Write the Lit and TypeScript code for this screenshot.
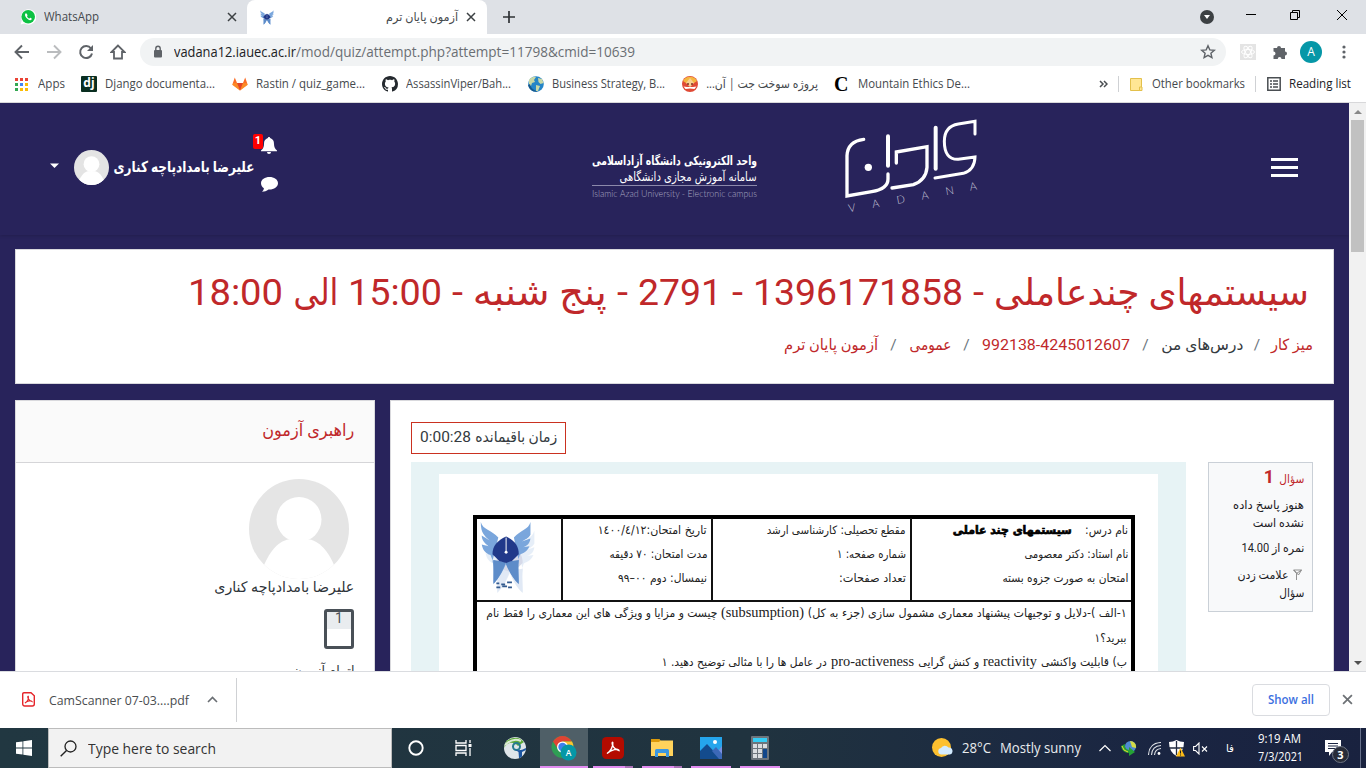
import { LitElement, html, css, svg } from "lit";
import { customElement, property } from "lit/decorators.js";

/** One line of text, condensed or widened to a given width. */
@customElement("fit-text")
class FitText extends LitElement {
  @property({ type: Number }) w = 0;
  static styles = css`
    :host { display: block; white-space: nowrap; flex: none; direction: ltr; text-align: left; }
    :host([dir="rtl"]) { direction: rtl; text-align: right; }
    span { display: inline-block; transform-origin: 0 50%; }
    :host([dir="rtl"]) span { transform-origin: 100% 50%; }
  `;
  firstUpdated() {
    const s = this.renderRoot.querySelector("span") as HTMLElement;
    const k = this.w / s.getBoundingClientRect().width;
    this.style.width = this.w + "px";
    s.style.transform = `scaleX(${k})`;
  }
  render() { return html`<span><slot></slot></span>`; }
}

const en = (w: number, t: string, c = "") => html`<fit-text class=${c} .w=${w}>${t}</fit-text>`;
const fa = (w: number, t: string, c = "") => html`<fit-text dir="rtl" class=${c} .w=${w}>${t}</fit-text>`;

const closeX = (n: number, c: string, sw: number) => html`<svg width=${n} height=${n} viewBox="0 0 10 10"><path d="M1 1l8 8M9 1l-8 8" stroke=${c} stroke-width=${sw} fill="none"/></svg>`;

const emblem = svg`
  <path d="M1 1C3 9 12 9 19 17L13 41C15 48 14 56 14 64C21 58 24 50 27 44C30 50 33 58 40 64C40 56 39 48 40 41L35 17C42 9 50 9 52 1L52 14C50 18 46 19 43 21L52 18C51 25 47 26 44 27L51 26C48 33 43 33 41 35L39 41L27 44L13 40L11 35C6 33 3 30 2 24L9 26C5 23 2 20 2 15L10 20C5 15 1 13 1 1Z" fill="#7aa6dc"/>
  <path d="M14 40C14 48 14 56 14 65C20 58 24 50 27 42ZM40 40C39 48 40 56 40 65C33 58 29 50 26 42Z" fill="#5d8cc9"/>
  <path d="M27 16C36 20 40 26 40 34L33 41L27 43L20 41L13 34C13 26 18 20 27 16Z" fill="#21398a"/>
  <path d="M27 17V32" stroke="#fff" stroke-width="1"/><circle cx="27" cy="32" r="1.500" fill="#fff"/>`;

const avatar = (n: number, bg: string) => html`<svg width=${n} height=${n} viewBox="0 0 100 100">
  <defs><clipPath id="c"><circle cx="50" cy="50" r="50"/></clipPath></defs>
  <g clip-path="url(#c)"><rect width="100" height="100" fill=${bg}/><circle cx="50" cy="40.500" r="22.500" fill="#fff"/>
  <path d="M15 86C24 66 33 62 39 60.500H61C67 62 77 67 85 86V100H15Z" fill="#fff"/></g></svg>`;

@customElement("browser-chrome")
class BrowserChrome extends LitElement {
  static styles = css`
    :host { display: block; height: 103px; background: #fff; font: 12px/16px "Open Sans", "DejaVu Sans", sans-serif; color: #45494d; }
    svg { display: block; flex: none; }
    .strip { height: 34px; background: #dee1e6; display: grid; grid-template-columns: 247px 240px 44px 653px 46px 42px 46px 48px; align-items: center; }
    .strip > * { justify-self: center; }
    .strip > .tab { justify-self: stretch; }
    .tab { height: 34px; display: flex; align-items: center; box-sizing: border-box; }
    .one { padding: 0 10px 0 20px; gap: 8px; }
    .grow { flex: 1; }
    .two { background: #fff; border-radius: 8px 8px 0 0; padding: 0 11px 0 13px; }
    .two fit-text { margin-right: 8px; }
    .bar { height: 36px; display: grid; grid-template-columns: 12px 20px 12px 20px 12px 20px 12px 20px 12px 1086px 12px 20px 12px 20px 10px 24px 10px 20px; align-items: center; }
    .bar > svg { justify-self: center; }
    .omni { height: 28px; border-radius: 14px; background: #f1f3f4; display: flex; align-items: center; padding: 0 10px 0 13px; font-size: 14px; line-height: 20px; color: #6a6e73; }
    .omni .host { color: #202124; margin-left: 11px; }
    .marks { height: 33px; box-sizing: border-box; border-bottom: 1px solid #d8d8da; display: grid; align-items: center; padding-bottom: 4px;
      grid-template-columns: 15px 23px 43px 24px 127px 24px 126px 24px 122px 24px 130px 24px 128px 24px 241px 19px 12px 22px 103px 12px 22px 77px; }
    .sep { width: 1px; height: 16px; background: #cfd1d4; }
    .face { width: 22px; height: 22px; border-radius: 50%; background: #0697a7; color: #fff; font-size: 12px; line-height: 22px; text-align: center; }
    .c { font: bold 20px/18px "Liberation Serif", serif; color: #000; }
    .dj { width: 16px; height: 16px; background: #092e20; color: #fff; font: bold 12px/14px "Open Sans", sans-serif; text-align: center; border-radius: 1px; }
    .dark { color: #202124; }
  `;
  render() {
    const colors = ["#ea4335", "#ea4335", "#ea4335", "#34a853", "#4285f4", "#fbbc05", "#34a853", "#fbbc05", "#fbbc05"];
    return html`
    <div class="strip">
      <div class="tab one">
        <svg width="16" height="16" viewBox="0 0 16 16"><path d="M.6 15.600L1.800 11.500A7.700 7.700 0 1 1 4.600 14.500Z" fill="#fff"/><circle cx="8.200" cy="7.800" r="6.800" fill="#0dc143"/><path d="M5.800 4.300c-1.300.8-1 2.700.7 4.700 1.700 1.900 4.100 3 5.200 1.300.4-.7-.4-1.100-1.400-1.600-.5 0-.7.8-1.100.8-1-.3-1.900-1.200-2.200-2 .1-.3.600-.6.5-1-.4-1.300-.7-2.300-1.700-2.200z" fill="#fff"/></svg>
        ${en(55, "WhatsApp")}<div class="grow"></div>${closeX(10, "#3c4043", 1.5)}
      </div>
      <div class="tab two">
        <svg width="14" height="15" viewBox="0 0 54 66" preserveAspectRatio="none">${emblem}</svg><div class="grow"></div>
        ${fa(72, "آزمون پایان ترم")}${closeX(10, "#3c4043", 1.5)}
      </div>
      <svg width="12" height="12" viewBox="0 0 12 12"><path d="M6 0v12M0 6h12" stroke="#2f3235" stroke-width="1.700"/></svg>
      <i></i>
      <svg width="14" height="14" viewBox="0 0 14 14"><circle cx="7" cy="7" r="7" fill="#3c4043"/><path d="M4 5h6l-3 4z" fill="#fff"/></svg>
      <svg width="10" height="10"><path d="M0 2.500h10" stroke="#000"/></svg>
      <svg width="10" height="18" viewBox="0 0 10 16"><path d="M.5 3.500h7v7h-7zM2.500 3.500v-2h7v7h-2" fill="none" stroke="#000"/></svg>
      <svg width="10" height="16" viewBox="0 0 10 14"><path d="M0 0l10 10M10 0L0 10" stroke="#000" fill="none"/></svg>
    </div>
    <div class="bar">
      <i></i><svg width="16" height="16" viewBox="0 0 16 16"><path d="M15 8H2M8 1.500L1.500 8 8 14.500" fill="none" stroke="#5f6368" stroke-width="1.900"/></svg>
      <i></i><svg width="16" height="16" viewBox="0 0 16 16"><path d="M1 8h13M8 1.500L14.500 8 8 14.500" fill="none" stroke="#babcbe" stroke-width="1.900"/></svg>
      <i></i><svg width="16" height="16" viewBox="0 0 16 16"><path d="M13 4.500A6 6 0 1 0 14 9.500" fill="none" stroke="#5f6368" stroke-width="2"/><path d="M15 1v6H9z" fill="#5f6368"/></svg>
      <i></i><svg width="16" height="16" viewBox="0 0 16 16"><path d="M8 1.500L1.500 8H4v6.500h8V8h2.500z" fill="none" stroke="#5f6368" stroke-width="1.800"/></svg>
      <i></i>
      <div class="omni">
        <svg width="10" height="14" viewBox="0 0 10 14"><rect x="1" y="5" width="8" height="7.500" rx="1" fill="#5f6368"/><path d="M2.800 6V3.500a2.200 2.200 0 0 1 4.400 0V6" fill="none" stroke="#5f6368" stroke-width="1.400"/></svg>
        ${en(122, "vadana12.iauec.ac.ir", "host")}${en(339, "/mod/quiz/attempt.php?attempt=11798&cmid=10639")}
        <div class="grow"></div>
        <svg width="16" height="16" viewBox="0 0 16 16"><path d="M8 1.800l1.800 4.100 4.500.4-3.400 2.900 1 4.400L8 11.300l-3.900 2.300 1-4.400-3.400-2.900 4.500-.4z" fill="none" stroke="#5f6368" stroke-width="1.400"/></svg>
      </div>
      <i></i><svg width="16" height="16" viewBox="0 0 16 16"><rect width="16" height="16" fill="#e4e4e4"/><g fill="none" stroke="#fff"><ellipse cx="8" cy="8" rx="6.500" ry="2.500"/><ellipse cx="8" cy="8" rx="6.500" ry="2.500" transform="rotate(60 8 8)"/><ellipse cx="8" cy="8" rx="6.500" ry="2.500" transform="rotate(120 8 8)"/></g></svg>
      <i></i><svg width="16" height="16" viewBox="0 0 16 16"><path d="M1.500 4H5a2 2 0 0 1 4 0h4v3.500a2 2 0 0 1 0 4V15H9.500a1.900 1.900 0 0 0-3.800 0H1.500v-3.500a2 2 0 0 0 0-4z" fill="#5f6368"/></svg>
      <i></i><div class="face">A</div><i></i>
      <svg width="4" height="14" viewBox="0 0 4 14"><g fill="#5f6368"><circle cx="2" cy="2" r="1.600"/><circle cx="2" cy="7" r="1.600"/><circle cx="2" cy="12" r="1.600"/></g></svg>
    </div>
    <div class="marks">
      <i></i><svg width="13" height="13">${colors.map((c, i) => svg`<rect x=${(i % 3) * 5} y=${Math.floor(i / 3) * 5} width="3" height="3" fill=${c}/>`)}</svg>${en(27, "Apps")}
      <div class="dj">dj</div>${en(110, "Django documenta...")}
      <svg width="16" height="16" viewBox="0 0 16 16"><path d="M8 14.500L.3 8.800 2.800 1.500 5 7h6l2.200-5.500 2.500 7.300z" fill="#fc6d26"/><path d="M8 14.500L5 7h6z" fill="#e24329"/><path d="M.3 8.800L1.500 7H5l3 7.500zM15.700 8.800L14.500 7H11l-3 7.500z" fill="#fca326" opacity=".55"/></svg>${en(109, "Rastin / quiz_game...")}
      <svg width="16" height="16" viewBox="0 0 16 16"><path d="M8 0C3.580 0 0 3.580 0 8c0 3.540 2.290 6.530 5.470 7.590.4.070.55-.17.55-.38 0-.19-.01-.82-.01-1.490-2.010.37-2.530-.49-2.690-.94-.09-.23-.48-.94-.82-1.130-.28-.15-.68-.52-.01-.53.63-.01 1.080.58 1.230.82.72 1.210 1.870.87 2.330.66.07-.52.28-.87.51-1.070-1.780-.2-3.640-.89-3.640-3.950 0-.87.31-1.590.82-2.150-.08-.2-.36-1.020.08-2.120 0 0 .67-.21 2.200.82.64-.18 1.320-.27 2-.27s1.360.09 2 .27c1.530-1.040 2.200-.82 2.200-.82.44 1.100.16 1.920.08 2.120.51.56.82 1.270.82 2.150 0 3.070-1.870 3.750-3.650 3.950.29.25.54.73.54 1.480 0 1.070-.01 1.930-.01 2.200 0 .21.15.46.55.38A8.010 8.010 0 0 0 16 8c0-4.420-3.580-8-8-8z" fill="#24292e"/></svg>${en(105, "AssassinViper/Bah...")}
      <svg width="16" height="16" viewBox="0 0 16 16"><circle cx="8" cy="8" r="7.800" fill="#2585c7"/><path d="M1 4C3 1 6 .5 8 1L6 4l1 2-3 1-1 3-2-1zM10 2l4 1 1.500 4-3 1-2-2zM8 9l4 1-2 5H8z" fill="#c9d8a6"/><path d="M0 9a8 8 0 0 0 10 6.500C5 14 3 12 2 8z" fill="#14588f"/></svg>${en(113, "Business Strategy, B...")}
      <svg width="16" height="16" viewBox="0 0 16 16"><circle cx="8" cy="8" r="8" fill="#e04a35"/><path d="M1 5a8 8 0 0 1 14 0l-3 2H4z" fill="#f5b63f"/><path d="M8 2l4 5-4 4-4-4z" fill="#f8cf91"/><circle cx="6" cy="8" r="1" fill="#7b3220"/><circle cx="10" cy="8" r="1" fill="#7b3220"/><path d="M1.500 10.500L5 11h6l3.500-.5-2 2.500-4.500-.5-4.500.5z" fill="#fff"/></svg>${fa(112, "پروژه سوخت جت | آن...")}
      <span class="c">C</span>${en(112, "Mountain Ethics De...")}
      <svg width="9" height="8" viewBox="0 0 9 8"><path d="M1 1l3 3-3 3M5 1l3 3-3 3" fill="none" stroke="#4a4e52" stroke-width="1.500"/></svg>
      <div class="sep"></div>
      <svg width="13" height="15" viewBox="0 0 13 15"><path d="M.5 1.500h11v12H.5z" fill="#ffe694" stroke="#e3c04b"/><path d="M9.500 10h2.500v3.500H9.500z" fill="#ffe694" stroke="#e3c04b"/></svg>${en(93, "Other bookmarks")}
      <div class="sep"></div>
      <svg width="14" height="14" viewBox="0 0 14 14"><path d="M.8.8h12.400v12.400H.8z" fill="none" stroke="#4a4e52" stroke-width="1.500"/><path d="M3 4h2M6 4h5M3 7h2M6 7h5M3 10h2M6 10h5" stroke="#4a4e52" stroke-width="1.300"/></svg>${en(62, "Reading list", "dark")}
    </div>`;
  }
}

@customElement("quiz-page")
class QuizPage extends LitElement {
  static styles = css`
    :host { display: grid; grid-template-columns: 1349px 17px; height: 568px; overflow: hidden; background: #28235b; font: 15px/22px Roboto, "DejaVu Sans", sans-serif; color: #343a40; }
    svg { display: block; flex: none; }
    .page { height: 568px; overflow: hidden; }
    .head { height: 132px; display: grid; grid-template-columns: 50px 24px 35px 4px 141px 24px 314px 165px 83px 150px 281px 27px; box-shadow: 0 1px 3px rgba(0,0,0,.15); }
    .caret { margin-top: 60px; }
    .pic { margin-top: 47px; }
    .name { margin-top: 53px; font-weight: bold; color: #fff; font-size: 15px; }
    .icons { position: relative; padding: 34px 0 0 7px; display: flex; flex-direction: column; gap: 23px; }
    .badge { position: absolute; left: -1px; top: 31px; width: 10px; height: 15px; background: #f00; border-radius: 2px; color: #fff; font: bold 11px/13px Roboto; text-align: center; }
    .brand { margin-top: 49px; color: #fff; }
    .b1 { font: bold 12.500px/17px "DejaVu Sans"; }
    .b2 { font: 12.500px/15px "DejaVu Sans"; margin-bottom: 1px; }
    .b3 { border-top: 1px solid #8c89ab; font: 300 9.500px/15px Lato, sans-serif; color: #aaa8c2; }
    .logo { margin-top: 9px; }
    .l { font: 300 33px Lato, sans-serif; fill: #c9c8da; }
    .burger { margin-top: 55px; display: flex; flex-direction: column; gap: 5px; }
    .burger b { height: 3px; background: #fff; }
    .card { background: #fff; border: 1px solid #d9d9dd; box-sizing: border-box; }
    .top { margin: 14px 15px 16px; height: 135px; padding: 18px 20px 0; }
    .h { font-size: 37px; line-height: 50px; color: #c0282a; margin-right: 4px; display: flex; gap: 10px; }
    .rt { direction: rtl; }
    .crumbs { display: flex; margin-top: 16px; line-height: 22px; font-size: 15.500px; color: #c0282a; }
    .s { color: #6c757d; width: 31px; text-align: center; }
    .s.n { width: 28px; padding-left: 0; }
    .k { color: #343a40; }
    .cols { display: grid; grid-template-columns: 360px 944px; gap: 15px; margin: 0 15px; height: 300px; }
    .side .t { height: 62px; box-sizing: border-box; border-bottom: 1px solid #d5d5d8; background: #fafafa; padding: 17px 20px; font-size: 17px; line-height: 25px; color: #c0282a; }
    .sb { padding: 16px 20px; }
    .sb .av { margin-right: 5px; width: 100px; }
    .who { margin-top: -2px; font-size: 14.500px; line-height: 22px; color: #2d3238; }
    .qn { margin-top: 10px; width: 24px; height: 34px; border: 3px solid #495057; border-radius: 3px; background: linear-gradient(#e9ecef 17px, #fff 17px); text-align: center; font-size: 14px; line-height: 12px; color: #495057; }
    .end { margin-top: 12px; font-size: 14.500px; }
    .main { padding: 21px 20px 0; }
    .time { box-sizing: border-box; width: 155px; height: 32px; border: 1px solid #ca3120; padding: 3px 8px; font-size: 15px; line-height: 22px; display: flex; direction: rtl; justify-content: space-between; }
    .q { display: flex; gap: 22px; margin-top: 8px; }
    .blue { width: 775px; height: 230px; box-sizing: border-box; background: #e7f3f5; padding: 12px 28px 0; }
    .paper { background: #fff; width: 719px; height: 220px; padding: 41px 24px 0 34px; box-sizing: border-box; color: #222; font: 11.500px/24px "DejaVu Sans"; }
    .table { border: 4px solid #000; border-bottom: 0; width: 662px; height: 190px; box-sizing: border-box; }
    .cells { display: grid; grid-template-columns: 86px 150px 199px 219px; height: 81px; border-bottom: 2px solid #111; }
    .cell { border-right: 2px solid #111; padding-right: 4px; display: flex; flex-direction: column; direction: rtl; margin-top: -1px; padding-top: 0; }
    .cell:last-child { border: 0; padding-right: 3px; }
    .cell:first-child { direction: ltr; padding: 3px 2px; }
    .ln { display: flex; direction: rtl; gap: 4px; }
    .body { padding: 0 4px 0 0; margin-top: -1px; direction: rtl; }
    .body .ln { height: 25px; }
    .body .ln:nth-child(2) { height: 24px; }
    .w { gap: 13px; }
    .bold { font-weight: bold; -webkit-text-stroke: .7px #000; color: #000; }
    .ser { font: 15px/22px "Liberation Serif", serif; }
    .info { box-sizing: border-box; width: 105px; height: 150px; border: 1px solid #cad0d7; background: #f8f9fa; padding: 5px 8px 0; direction: rtl; font-size: 12px; line-height: 18px; color: #1d2125; display: flex; flex-direction: column; }
    .no { display: flex; gap: 5px; color: #c0282a; line-height: 22px; align-items: center; height: 21px; }
    .no b { font-size: 18px; line-height: 20px; margin-top: -3px; }
    .g { margin-top: 7px; }
    .fl { display: flex; gap: 5px; align-items: center; margin-top: 9px; padding-right: 2px; }
    .sc { background: #f1f1f1; display: flex; flex-direction: column; justify-content: space-between; align-items: center; padding: 7px 0 6px; }
    .thumb { width: 13px; height: 132px; background: #c1c1c1; margin-bottom: auto; margin-top: 6px; }
  `;
  render() {
    const vadana: [string, number, number][] = [["V", 867, 325], ["A", 938, 312], ["D", 1012, 300], ["A", 1086, 287], ["N", 1159, 274], ["A", 1231, 260]];
    return html`
    <div class="page">
      <div class="head">
        <i></i><svg class="caret" width="9" height="5" viewBox="0 0 9 5"><path d="M0 .500h9L4.500 5z" fill="#fff"/></svg>
        <div class="pic">${avatar(35, "#e4e4e4")}</div><i></i>
        <div class="name">${fa(141, "علیرضا بامدادپاچه کناری")}</div>
        <div class="icons"><svg width="16" height="17" viewBox="0 0 16 17"><path d="M8 0c.7 0 1.100.4 1.100 1.100C12 2 13 4 13 7c0 3 1 5 3 6.500v.7H0v-.7C2 12 3 10 3 7c0-3 1-5 3.900-5.900C6.900.4 7.300 0 8 0zM6 15h4a2 2 0 0 1-4 0z" fill="#fff"/></svg>
          <svg width="17" height="15" viewBox="0 0 17 15"><path d="M8.500 0C13 0 17 2.500 17 6.200s-4 6.300-8.500 6.300H7.500C5.500 14 3.500 14.700 1 14.700c1-1 1.800-2 1.900-3.500C1 10 0 8 0 6.200 0 2.500 4 0 8.500 0z" fill="#fff"/></svg>
          <span class="badge">1</span></div>
        <i></i>
        <div class="brand">${fa(165, "واحد الکترونیکی دانشگاه آزاداسلامی", "b1")}<div class="rt">${fa(137, "سامانه آموزش مجازی دانشگاهی", "b2")}</div>
          <div class="b3">${en(165, "Islamic Azad University - Electronic campus")}</div></div>
        <i></i>
        <svg class="logo" width="150" height="104" viewBox="840 24 450 312"><g fill="none" stroke="#fff" stroke-width="10" stroke-linecap="round">
          <path d="M911 106Q863 112 861 155V276L935 263Q984 255 984 225V210"/><path d="M984 97V185" stroke-width="12"/>
          <path d="M1009 177V144L1101 128V190Q1098 228 1060 242L996 252"/><path d="M1127 71V194" stroke-width="12"/>
          <path d="M1245 90V52L1195 60Q1153 67 1153 112Q1153 168 1195 166L1245 159Q1244 198 1210 208L1125 222" stroke-width="9"/></g>
          <circle cx="925" cy="190" r="11" fill="#fff"/>
          ${vadana.map(([c, x, y]) => svg`<text class="l" transform="translate(${x} ${y}) rotate(-10)">${c}</text>`)}</svg>
        <i></i><div class="burger"><b></b><b></b><b></b></div>
      </div>
      <div class="card top rt">
        <div class="h">${fa(315, "سیستمهای چندعاملی")}${en(11, "-")}${en(210, "1396171858")}${en(11, "-")}${en(84, "2791")}${en(11, "-")}${fa(134, "پنج شنبه")}${en(11, "-")}${en(94, "15:00")}${fa(45, "الی")}${en(95, "18:00")}</div>
        <div class="crumbs">${fa(42, "میز کار")}<span class="s n">/</span>${fa(82, "درس‌های من", "k")}<span class="s">/</span>${en(148, "992138-4245012607")}<span class="s">/</span>${fa(42, "عمومی")}<span class="s">/</span>${fa(94, "آزمون پایان ترم")}</div>
      </div>
      <div class="cols">
        <div class="card side rt">
          <div class="t">${fa(92, "راهبری آزمون")}</div>
          <div class="sb"><div class="av">${avatar(100, "#e5e5e5")}</div><div class="who">${fa(140, "علیرضا بامدادپاچه کناری")}</div><div class="qn">1</div><div class="end">${fa(75, "اتمام آزمون ...")}</div></div>
        </div>
        <div class="card main">
          <div class="time">${fa(82, "زمان باقیمانده")}${en(51, "0:00:28")}</div>
          <div class="q">
            <div class="blue"><div class="paper"><div class="table">
              <div class="cells">
                <div class="cell"><svg width="62" height="76" viewBox="0 0 62 78"><g opacity=".18" transform="translate(4 9)">${emblem}</g>${emblem}<path d="M17 64h3m2 1h4m2-2h5m-16 5h4m2-1h5m1 1h4" stroke="#345b8f" stroke-width="1.800"/></svg></div>
                <div class="cell">${fa(109, "تاریخ امتحان:١٤٠٠/٤/١٢")}${fa(98, "مدت امتحان: ٧٠ دقیقه")}${fa(89, "نیمسال: دوم ٠٠–٩٩")}</div>
                <div class="cell">${fa(139, "مقطع تحصیلی: کارشناسی ارشد")}${fa(69, "شماره صفحه: ۱")}${fa(67, "تعداد صفحات:")}</div>
                <div class="cell"><div class="ln w">${fa(43, "نام درس:")}${fa(119, "سیستمهای چند عاملی", "bold")}</div>${fa(104, "نام استاد: دکتر معصومی")}${fa(126, "امتحان به صورت جزوه بسته")}</div>
              </div>
              <div class="body">
                <div class="ln">${fa(319, "۱-الف )-دلایل و توجیهات پیشنهاد معماری مشمول سازی (جزء به کل)")}${en(83, "(subsumption)", "ser")}${fa(231, "چیست و مزایا و ویژگی های این معماری را فقط نام")}</div>
                <div class="ln">${fa(32, "ببرید؟۱")}</div>
                <div class="ln">${fa(86, "ب) قابلیت واکنشی")}${en(54, "reactivity", "ser")}${fa(61, "و کنش گرایی")}${en(83, "pro-activeness", "ser")}${fa(165, "در عامل ها را با مثالی توضیح دهید. ۱")}</div>
              </div>
            </div></div></div>
            <div class="info">
              <div class="no">${fa(25, "سؤال")}<b>1</b></div>
              <div>${fa(71, "هنوز پاسخ داده", "g")}${fa(51, "نشده است")}</div>
              <div class="g">${fa(63, "نمره از 14.00")}</div>
              <div class="fl"><svg width="9" height="12" viewBox="0 0 9 12"><path d="M8.500 1L.5 1 3.500 4.500 3.500 11M1 1L5.500 6 8.500 1L3.500 4.500" fill="none" stroke="#868686" stroke-width=".9"/></svg>${fa(51, "علامت زدن")}</div>
              <div>${fa(25, "سؤال")}</div>
            </div>
          </div>
        </div>
      </div>
    </div>
    <div class="sc"><svg width="8" height="4"><path d="M0 4h8L4 0z" fill="#888"/></svg><div class="thumb"></div><svg width="8" height="4"><path d="M0 0h8L4 4z" fill="#505050"/></svg></div>`;
  }
}

@customElement("desktop-bars")
class DesktopBars extends LitElement {
  static styles = css`
    :host { display: block; font: 13px/18px "Open Sans", "DejaVu Sans", sans-serif; color: #4a4d50; }
    svg { display: block; flex: none; }
    .dl { height: 57px; box-sizing: border-box; border-top: 1px solid #dadce0; background: #fff; display: grid; grid-template-columns: 22px 27px 158px 29px 1016px 78px 12px 11px; align-items: center; padding-bottom: 1px; }
    .dl .v { width: 1px; height: 44px; background: #cfd1d4; }
    .all { box-sizing: border-box; width: 78px; height: 32px; border: 1px solid #dadce0; border-radius: 4px; padding: 6px 15px; font-size: 12px; font-weight: 600; color: #3c6fe0; }
    .task { height: 40px; display: flex; background: linear-gradient(90deg, #213741, #20333f 55%, #1a2542 85%, #19223f); color: #fff; }
    .win { width: 48px; display: flex; align-items: center; justify-content: center; }
    .find { box-sizing: border-box; width: 344px; border: 1px solid #bcbcbc; background: #f2f2f2; display: flex; align-items: center; gap: 11px; padding-left: 11px; color: #333; font-size: 15px; }
    .apps { display: grid; grid-template-columns: 48px 46px 54px 48px 5px 40px 9px 40px 9px 40px 9px 40px; }
    .app { display: flex; align-items: center; justify-content: center; box-sizing: border-box; }
    .on { border-bottom: 2px solid #e18cf0; padding-top: 2px; }
    .act { background: #4f5f67; }
    .off { padding-left: 4px; }
    .two { border-image: linear-gradient(90deg, #e18cf0 78%, #ab72b8 78%) 1; border-width: 0 0 2px; border-style: solid; }
    .tray { margin-left: auto; display: grid; grid-template-columns: 30px 38px 99px 22px 27px 21px 24px 33px 32px 67px 35px 6px; align-items: center; font-size: 14px; color: #e9ecef; }
    .clock { font-size: 12px; line-height: 18px; color: #fff; display: flex; flex-direction: column; align-items: flex-start; }
    .note { position: relative; }
    .num { position: absolute; left: 7px; top: 6px; width: 15px; height: 15px; border: 1px solid #6e7584; background: #282c38; border-radius: 50%; font: bold 11px/15px "Open Sans"; text-align: center; color: #fff; }
    .edge { width: 1px; height: 40px; background: #67708a; }
    .f { font-size: 11px; color: #fff; }
  `;
  render() {
    return html`
    <div class="dl"><i></i>
      <svg width="13" height="15" viewBox="0 0 13 15"><path d="M2 .7h7l3.300 3V12a2 2 0 0 1-2 2H2.700a2 2 0 0 1-2-2V2Q.7.7 2 .7z" fill="#fff" stroke="#e5252a" stroke-width="1.400"/><path d="M3 11C5.500 9.500 6.800 6.500 6.300 4.200 5 4 6 8.500 10 9.500 9 8 5 9 3 11z" fill="none" stroke="#e5252a" stroke-width="1.100"/></svg>
      ${en(140, "CamScanner 07-03....pdf")}
      <svg width="11" height="7" viewBox="0 0 11 7"><path d="M1 6l4.500-4.500L10 6" stroke="#6a6e73" stroke-width="1.600" fill="none"/></svg>
      <div class="v"></div>
      <div class="all">${en(46, "Show all")}</div><i></i>${closeX(11, "#6d7175", 1.6)}
    </div>
    <div class="task">
      <div class="win"><svg width="16" height="16" viewBox="0 0 16 16"><path d="M0 2.300L6.500 1.400V7.600H0zM7.300 1.300L16 0v7.600H7.300zM0 8.400h6.500v6.200L0 13.700zM7.300 8.400H16V16l-8.700-1.200z" fill="#fff"/></svg></div>
      <div class="find"><svg width="17" height="17" viewBox="0 0 17 17"><circle cx="10.500" cy="6.500" r="5.500" fill="none" stroke="#222" stroke-width="1.300"/><path d="M6.500 10.500L.7 16.300" stroke="#222" stroke-width="1.400"/></svg>${en(128, "Type here to search")}</div>
      <div class="apps">
        <div class="app"><svg width="16" height="16"><circle cx="8" cy="8" r="6.700" fill="none" stroke="#fff" stroke-width="1.900"/></svg></div>
        <div class="app"><svg width="17" height="16" viewBox="0 0 17 16"><path d="M1 0v3h10V0M1 16v-3h10v3M1 5.500h10v5H1zM15 0v3M15 8v8" fill="none" stroke="#fff" stroke-width="1.300"/><rect x="13.500" y="4" width="3" height="3" fill="#fff"/></svg></div>
        <div class="app off"><svg width="22" height="22" viewBox="0 0 22 22"><defs><clipPath id="r"><circle cx="11" cy="11" r="11"/></clipPath></defs><g clip-path="url(#r)"><rect width="22" height="22" fill="#dfe5e9"/><path d="M0 11C4 4 10 5 14 9L20 5Q13-3 2 4z" fill="#5faa3c"/><path d="M1 8Q9 0 17 4" stroke="#dcebd5" stroke-width="2" fill="none"/><circle cx="12.500" cy="9.500" r="3.500" fill="none" stroke="#267b8f" stroke-width="2"/><path d="M10 12q5 3 12-1v2l-4 2v6h-3l-.5-6z" fill="#1c559f"/></g></svg></div>
        <div class="app on act"><svg width="26" height="26" viewBox="0 0 26 26"><circle cx="11.500" cy="12" r="11" fill="#2f9e54"/><path d="M2 6.500A11 11 0 0 1 21 6.500H11.500L7 14z" fill="#df4433"/><path d="M21 6.500a11 11 0 0 1-9 16.500L16 13 12 6.500z" fill="#fbc32f"/><circle cx="11.500" cy="12" r="5.500" fill="#fff"/><circle cx="11.500" cy="12" r="4.200" fill="#3e80ee"/><circle cx="17.500" cy="17.500" r="8" fill="#0697a7"/><text x="17.500" y="20.500" font-size="8.500" font-weight="600" text-anchor="middle" fill="#fff">A</text></svg></div><i></i>
        <div class="app on two"><svg width="22" height="22" viewBox="0 0 22 22"><rect width="22" height="22" rx="4.500" fill="#b30b00"/><path d="M5 16.500C8.500 14.500 11.500 9 10.800 5.500 9.500 4 9.500 11.500 17 13.500 17 11 9 12.500 5 16.500z" fill="none" stroke="#fff" stroke-width="1.400"/></svg></div><i></i>
        <div class="app on two"><svg width="22" height="18" viewBox="0 0 22 18"><path d="M0 0h8l1.500 1.500H22V17H0z" fill="#ffd35c"/><path d="M0 0h8l1.500 1.500L8 3H0z" fill="#dc9a0a"/><path d="M4 18v-6.500Q4 10 5.500 10h11q1.500 0 1.500 1.500V18h-3v-4H7v4z" fill="#3b97e0"/></svg></div><i></i>
        <div class="app on"><svg width="22" height="22" viewBox="0 0 22 22"><rect width="22" height="22" fill="#25a5ec"/><path d="M12 22L22 9v13z" fill="#7b8fe0"/><path d="M0 14l7-7 14 15H0z" fill="#134b8d"/><path d="M12 14l4-4 6 7v5h-3z" fill="#3c69b8"/><circle cx="15" cy="5" r="2" fill="#fff"/></svg></div><i></i>
        <div class="app on"><svg width="18" height="24" viewBox="0 0 18 24"><rect width="18" height="24" rx="1" fill="#6d757c"/><rect x="2" y="2" width="14" height="4" fill="#35cdf5"/>${[0, 1, 2].map(r => [0, 1, 2].map(c => svg`<rect x=${2 + c * 5} y=${8 + r * 5} width="4" height="4" fill=${c == 2 && r ? "#12478b" : "#dadde0"}/>`))}<rect x="12" y="13" width="4" height="9" fill="#12478b"/></svg></div>
      </div>
      <div class="tray">
        <svg width="21" height="20" viewBox="0 0 21 20"><circle cx="9.500" cy="9.500" r="9.500" fill="#fdc02f"/><path d="M9 16.500a3.300 3.300 0 0 1 0-6.500 4.500 4.500 0 0 1 7.500-.5A3.600 3.600 0 0 1 18 16.500z" fill="#d3ebff"/></svg>
        ${en(29, "28°C")}${en(81, "Mostly sunny")}
        <svg width="12" height="8" viewBox="0 0 12 8"><path d="M.500 7L6 1.500 11.500 7" fill="none" stroke="#fff" stroke-width="1.200"/></svg>
        <svg width="16" height="15" viewBox="0 0 16 15"><circle cx="9.500" cy="5.500" r="5.500" fill="#4f8bd0"/><path d="M9 0a6 6 0 0 1 6 7l-4-1z" fill="#d5dc45"/><path d="M0 5l4-2q-1 5 4 6V6l6 5-6 4v-3Q1 12 0 5z" fill="#25a135"/><path d="M1 5q1 5 6 6" stroke="#f2d430" fill="none"/></svg>
        <svg width="13" height="13" viewBox="0 0 13 13"><path d="M.5 13Q1 1 13 .500M3.500 13Q4 4 13 3.500M6.500 13Q7 7 13 6.500" fill="none" stroke="#dfe2e6" stroke-width="1.100"/><circle cx="11" cy="11.500" r="1.400" fill="#fff"/></svg>
        <svg width="16" height="17" viewBox="0 0 16 17"><path d="M7.500 0Q11 2 15 2q0 10-7.500 14Q0 12 0 2q4 0 7.500-2z" fill="#fff"/><path d="M7.500 1v14M0 8h15" stroke="#222b40" stroke-width="1.300"/><path d="M11.500 7.500L16 16.500H7z" fill="#fcbb17"/><path d="M11.500 10.500v3M11.500 14.500v1" stroke="#222"/></svg>
        <svg width="15" height="13" viewBox="0 0 15 13"><path d="M.6 4.500h2L6 1v11L2.600 8.500h-2z" fill="none" stroke="#fff" stroke-width="1.100"/><path d="M9 4.500l5 5M14 4.500l-5 5" stroke="#fff" stroke-width="1.100"/></svg>
        ${en(8, "فا", "f")}
        <div class="clock">${en(43, "9:19 AM")}${en(45, "7/3/2021")}</div>
        <div class="note"><svg width="17" height="17" viewBox="0 0 17 17"><path d="M0 0h16v12H7l-3 4v-4H0z" fill="#fff"/><path d="M3 3.500h10M3 6h10M3 8.500h7" stroke="#1b2542"/></svg><span class="num">3</span></div>
        <div class="edge"></div>
      </div>
    </div>`;
  }
}

@customElement("app-root")
class AppRoot extends LitElement {
  static styles = css`
    :host { display: block; width: 1366px; height: 768px; overflow: hidden; background: #fff; }
    .shell { display: grid; grid-template-rows: 103px 568px 97px; }
  `;
  render() {
    return html`<div class="shell"><browser-chrome></browser-chrome><quiz-page></quiz-page><desktop-bars></desktop-bars></div>`;
  }
}
